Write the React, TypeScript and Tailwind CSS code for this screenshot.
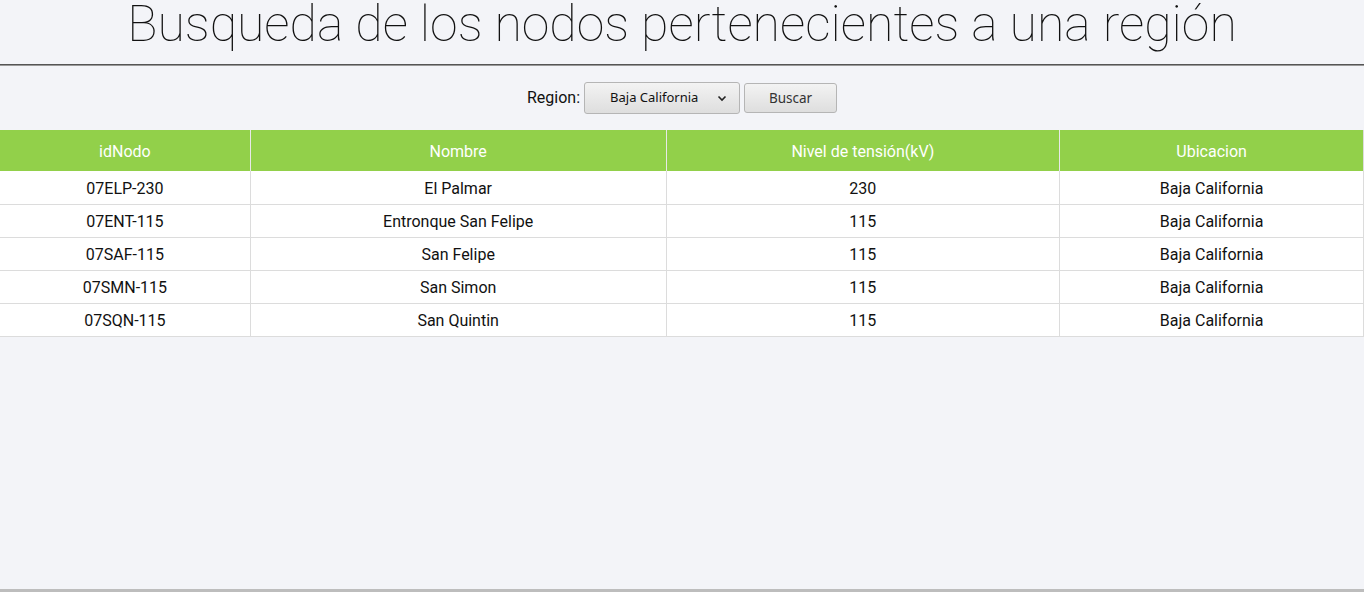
const rows = [
  ["07ELP-230", "El Palmar", "230", "Baja California"],
  ["07ENT-115", "Entronque San Felipe", "115", "Baja California"],
  ["07SAF-115", "San Felipe", "115", "Baja California"],
  ["07SMN-115", "San Simon", "115", "Baja California"],
  ["07SQN-115", "San Quintin", "115", "Baja California"],
];

const cols = ["w-[250px]", "w-[416px]", "w-[394px]", "w-[304px]"];

export default function App() {
  return (
    <div className="h-[592px] bg-[#f3f4f8] font-['Roboto',sans-serif] text-[#111] flex flex-col overflow-hidden">
      <h1 className="h-[64px] shrink-0 text-center text-[50px] leading-[48px] font-thin text-[#111]">
        Busqueda de los nodos pertenecientes a una región
      </h1>
      <div className="h-[2px] shrink-0 border-t border-t-[#555] border-b border-b-[#999]" />
      <div className="flex items-center justify-center gap-1 h-[64px] shrink-0">
        <span className="text-[16px]">Region:</span>
        <div className="w-[156px] h-[32px] flex items-center justify-between pl-[25px] pr-[11px] rounded-[3px] border border-[#b5b5b5] bg-gradient-to-b from-[#f3f3f3] to-[#dedede] font-['Noto_Sans',sans-serif] text-[13px] text-[#111]">
          <span>Baja California</span>
          <svg width="12" height="12" viewBox="0 0 12 12" fill="none" stroke="#222" strokeWidth="1.6">
            <path d="M2.5 4.5 L6 8 L9.5 4.5" />
          </svg>
        </div>
        <button className="w-[93px] h-[30px] rounded-[3px] border border-[#b5b5b5] bg-gradient-to-b from-[#f3f3f3] to-[#dedede] font-['Noto_Sans',sans-serif] text-[13.5px] text-[#333]">
          Buscar
        </button>
      </div>
      <div className="w-[1364px] shrink-0 border-r border-b border-[#dcdcdc] bg-white">
        <div className="flex h-[41px] bg-[#92d04a] text-white text-[16px]">
          {["idNodo", "Nombre", "Nivel de tensión(kV)", "Ubicacion"].map((h, i) => (
            <div
              key={h}
              className={`${cols[i]} pt-[2px] flex items-center justify-center ${i > 0 ? "border-l border-[#e8e8e8]" : ""}`}
            >
              {h}
            </div>
          ))}
        </div>
        {rows.map((r, ri) => (
          <div key={ri} className={`flex h-[33px] text-[16px] ${ri > 0 ? "border-t border-[#dcdcdc]" : ""}`}>
            {r.map((c, i) => (
              <div
                key={i}
                className={`${cols[i]} pt-[2px] flex items-center justify-center ${i > 0 ? "border-l border-[#dcdcdc]" : ""}`}
              >
                {c}
              </div>
            ))}
          </div>
        ))}
      </div>
      <div className="flex-1" />
      <div className="h-[3px] shrink-0 bg-[#bdbdbd]" />
    </div>
  );
}
